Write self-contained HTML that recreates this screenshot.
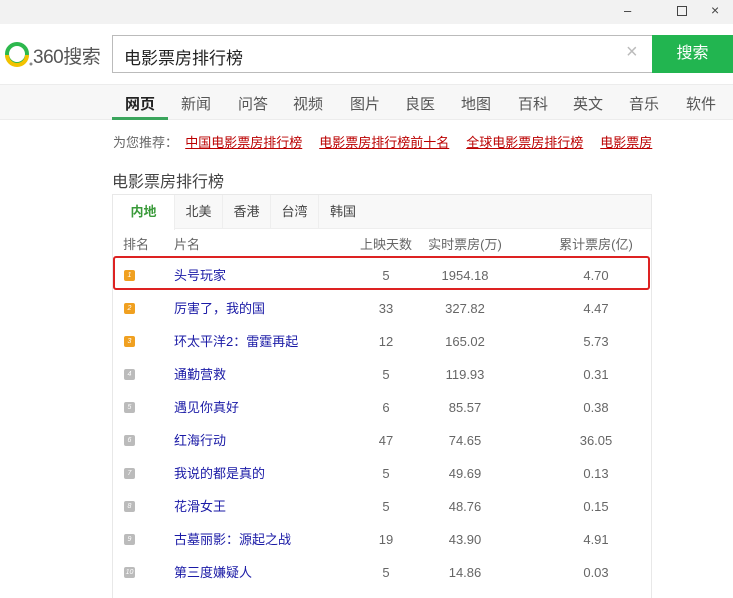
<!DOCTYPE html>
<html><head><meta charset="utf-8"><style>
*{margin:0;padding:0;box-sizing:border-box}
body{width:733px;height:598px;overflow:hidden;background:#fff;font-family:"Liberation Sans","Noto Sans CJK SC",sans-serif;position:relative;color:#333}
.abs{position:absolute}
.title{left:0;top:0;width:733px;height:24px;background:#f2f2f2}
.nav{left:0;top:84px;width:733px;height:36px;background:#f7f7f7;border-top:1px solid #ececec;border-bottom:1px solid #ececec}
.nav span{position:absolute;top:8px;font-size:15px;color:#555}
.rec{top:132px;left:113px;font-size:13px;color:#666}
.rec a{color:#b00;text-decoration:underline;margin-right:17px}
.box{left:112px;top:194px;width:540px;height:404px;border:1px solid #e8e8e8;border-bottom:none}
.tabs{height:34px;background:#f8f8f8;border-bottom:1px solid #eee;position:relative}
.tabs span{position:absolute;top:0;height:34px;line-height:33px;width:48px;text-align:center;font-size:13px;color:#444;border-right:1px solid #eee}
.row{position:absolute;left:0;width:538px;height:33px;font-size:13px;line-height:33px}
.row .n{position:absolute;left:61px;color:#1a1aa6}
.row .c{position:absolute;text-align:center;color:#666;width:100px}
.b{position:absolute;left:11px;top:11px;width:11px;height:11px;border-radius:2px;background:#bbb;color:#fff;font-size:7px;line-height:11px;text-align:center}
.o{background:#f0a020}
</style></head><body>
<div class="abs title"></div>
<div class="abs" style="left:624px;top:3px;font-size:13px;color:#333">–</div>
<div class="abs" style="left:677px;top:6px;width:10px;height:10px;border:1px solid #444"></div>
<div class="abs" style="left:711px;top:2px;font-size:14px;color:#444">×</div>
<svg class="abs" style="left:3px;top:40px" width="30" height="28" viewBox="0 0 30 28"><circle cx="14" cy="14" r="10" stroke="#2db84d" stroke-width="4" fill="none"/><path d="M4 15A10 10 0 0 0 24 15" stroke="#f2c200" stroke-width="4" fill="none"/><circle cx="28" cy="24" r="1.5" fill="#888"/></svg>
<div class="abs" style="left:33px;top:42px;font-size:19px;color:#555;letter-spacing:-0.5px">360搜索</div>
<div class="abs" style="left:112px;top:35px;width:541px;height:38px;border:1px solid #bbb;border-right:none"></div>
<div class="abs" style="left:124px;top:44px;font-size:17px;color:#222">电影票房排行榜</div>
<div class="abs" style="left:626px;top:41px;font-size:20px;color:#bbb">×</div>
<div class="abs" style="left:652px;top:35px;width:81px;height:38px;background:#22b550;color:#fff;font-size:16px;text-align:center;line-height:38px">搜索</div>
<div class="abs nav">
<span style="left:125px;font-weight:bold;color:#222">网页</span><span style="left:181px">新闻</span><span style="left:238px">问答</span><span style="left:293px">视频</span><span style="left:350px">图片</span><span style="left:405px">良医</span><span style="left:461px">地图</span><span style="left:518px">百科</span><span style="left:573px">英文</span><span style="left:629px">音乐</span><span style="left:686px">软件</span>
<div style="position:absolute;left:112px;top:32px;width:56px;height:3px;background:#3aa55c"></div>
</div>
<div class="abs rec">为您推荐：&nbsp;&nbsp;<a>中国电影票房排行榜</a><a>电影票房排行榜前十名</a><a>全球电影票房排行榜</a><a>电影票房</a></div>
<div class="abs" style="left:112px;top:168px;font-size:16px;color:#444">电影票房排行榜</div>
<div class="abs box">
<div class="tabs"><span style="left:0;background:#fff;color:#3a9a3a;font-weight:bold;height:35px;width:62px">内地</span><span style="left:62px">北美</span><span style="left:110px">香港</span><span style="left:158px">台湾</span><span style="left:206px;border:none">韩国</span></div>
<div class="row" style="top:33px;color:#666"><span style="position:absolute;left:10px">排名</span><span style="position:absolute;left:61px">片名</span><span class="c" style="left:223px">上映天数</span><span class="c" style="left:302px">实时票房(万)</span><span class="c" style="left:433px">累计票房(亿)</span></div>
<div class="row" style="top:64px"><i class="b o">1</i><span class="n">头号玩家</span><span class="c" style="left:223px">5</span><span class="c" style="left:302px">1954.18</span><span class="c" style="left:433px">4.70</span></div>
<div class="row" style="top:97px"><i class="b o">2</i><span class="n">厉害了，我的国</span><span class="c" style="left:223px">33</span><span class="c" style="left:302px">327.82</span><span class="c" style="left:433px">4.47</span></div>
<div class="row" style="top:130px"><i class="b o">3</i><span class="n">环太平洋2：雷霆再起</span><span class="c" style="left:223px">12</span><span class="c" style="left:302px">165.02</span><span class="c" style="left:433px">5.73</span></div>
<div class="row" style="top:163px"><i class="b">4</i><span class="n">通勤营救</span><span class="c" style="left:223px">5</span><span class="c" style="left:302px">119.93</span><span class="c" style="left:433px">0.31</span></div>
<div class="row" style="top:196px"><i class="b">5</i><span class="n">遇见你真好</span><span class="c" style="left:223px">6</span><span class="c" style="left:302px">85.57</span><span class="c" style="left:433px">0.38</span></div>
<div class="row" style="top:229px"><i class="b">6</i><span class="n">红海行动</span><span class="c" style="left:223px">47</span><span class="c" style="left:302px">74.65</span><span class="c" style="left:433px">36.05</span></div>
<div class="row" style="top:262px"><i class="b">7</i><span class="n">我说的都是真的</span><span class="c" style="left:223px">5</span><span class="c" style="left:302px">49.69</span><span class="c" style="left:433px">0.13</span></div>
<div class="row" style="top:295px"><i class="b">8</i><span class="n">花滑女王</span><span class="c" style="left:223px">5</span><span class="c" style="left:302px">48.76</span><span class="c" style="left:433px">0.15</span></div>
<div class="row" style="top:328px"><i class="b">9</i><span class="n">古墓丽影：源起之战</span><span class="c" style="left:223px">19</span><span class="c" style="left:302px">43.90</span><span class="c" style="left:433px">4.91</span></div>
<div class="row" style="top:361px"><i class="b">10</i><span class="n">第三度嫌疑人</span><span class="c" style="left:223px">5</span><span class="c" style="left:302px">14.86</span><span class="c" style="left:433px">0.03</span></div>
</div>
<div class="abs" style="left:113px;top:256px;width:537px;height:34px;border:2.5px solid #d22;border-radius:3px"></div>
</body></html>
